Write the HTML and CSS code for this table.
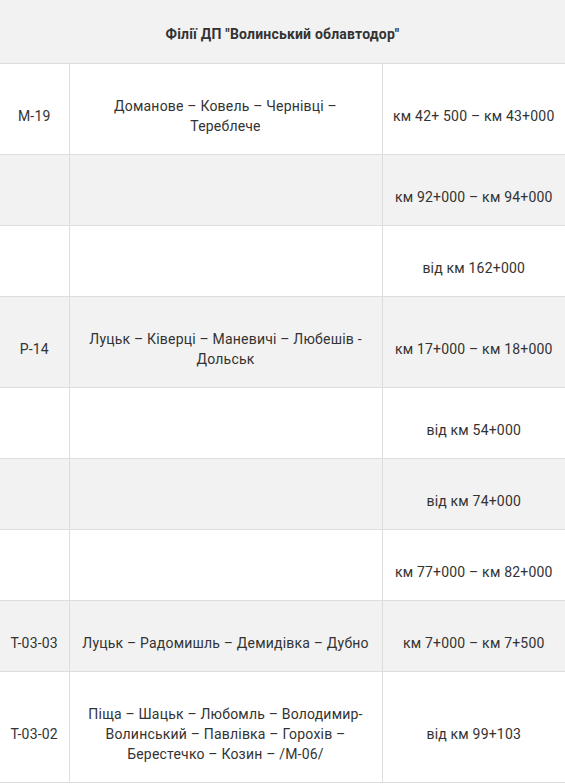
FILE: index.html
```html
<!DOCTYPE html>
<html lang="uk">
<head>
<meta charset="utf-8">
<title>Філії ДП "Волинський облавтодор"</title>
<link rel="stylesheet" href="styles.css">
</head>
<body>
<table class="roads">
  <colgroup>
    <col class="c1">
    <col class="c2">
    <col class="c3">
  </colgroup>
  <thead>
    <tr><th colspan="3">Філії ДП "Волинський облавтодор"</th></tr>
  </thead>
  <tbody>
    <tr class="odd"><td>М-19</td><td>Доманове – Ковель – Чернівці – Тереблече</td><td>км 42+ 500 – км 43+000</td></tr>
    <tr class="even"><td></td><td></td><td>км 92+000 – км 94+000</td></tr>
    <tr class="odd"><td></td><td></td><td>від км 162+000</td></tr>
    <tr class="even"><td>Р-14</td><td>Луцьк – Ківерці – Маневичі – Любешів - Дольськ</td><td>км 17+000 – км 18+000</td></tr>
    <tr class="odd"><td></td><td></td><td>від км 54+000</td></tr>
    <tr class="even"><td></td><td></td><td>від км 74+000</td></tr>
    <tr class="odd"><td></td><td></td><td>км 77+000 – км 82+000</td></tr>
    <tr class="even"><td>Т-03-03</td><td>Луцьк – Радомишль – Демидівка – Дубно</td><td>км 7+000 – км 7+500</td></tr>
    <tr class="odd"><td>Т-03-02</td><td>Піща – Шацьк – Любомль – Володимир-Волинський – Павлівка – Горохів – Берестечко – Козин – /М-06/</td><td>від км 99+103</td></tr>
  </tbody>
</table>
</body>
</html>
```

FILE: styles.css
```css
html, body {
  margin: 0;
  padding: 0;
  background: #ffffff;
}

body {
  font-family: Roboto, "Liberation Sans", Arial, sans-serif;
  font-size: 14px;
  line-height: 20px;
  letter-spacing: 0.2px;
  color: #333333;
}

.roads {
  width: 565px;
  border-collapse: collapse;
  table-layout: fixed;
}

.c1 { width: 69px; }
.c2 { width: 313px; }
.c3 { width: 183px; }

.roads th {
  background: #f2f2f2;
  font-weight: 700;
  text-align: center;
  padding: 24px 10px 19px;
  border-bottom: 1px solid #dddddd;
}

.roads td {
  text-align: center;
  vertical-align: middle;
  padding: 32px 10px 18px;
  border: 1px solid #dddddd;
  border-top: 0;
}

.roads td:first-child {
  border-left: 0;
  padding-left: 4px;
  padding-right: 4px;
}
.roads td:last-child { border-right: 0; }

.roads tr.even td { background: #f2f2f2; }
.roads tr.odd td { background: #ffffff; }
```
